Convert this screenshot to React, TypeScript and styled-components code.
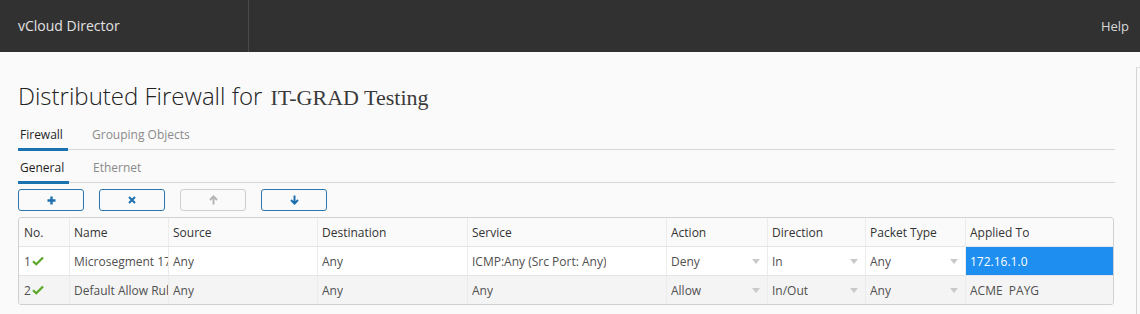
import React from 'react';
import styled, { createGlobalStyle } from 'styled-components';

const GlobalStyle = createGlobalStyle`
  html, body {
    margin: 0;
    padding: 0;
    background: #fafafa;
    font-family: 'Open Sans', 'Liberation Sans', sans-serif;
  }
`;

const Page = styled.div`
  width: 1140px;
  height: 314px;
  overflow: hidden;
  display: flex;
  flex-direction: column;
  background: #fafafa;
`;

const Header = styled.header`
  height: 52px;
  flex: none;
  display: flex;
  align-items: stretch;
  background: #313131;
  color: #e2e2e2;
`;

const Brand = styled.div`
  width: 249px;
  padding-left: 18px;
  box-sizing: border-box;
  display: flex;
  align-items: center;
  font-size: 14px;
  border-right: 1px solid #4a4a4a;
  padding-bottom: 2px;
`;

const HeaderSpacer = styled.div`
  flex: 1;
`;

const HelpLink = styled.div`
  display: flex;
  align-items: center;
  padding-right: 11px;
  font-size: 13px;
  color: #d8d8d8;
`;

const Body = styled.div`
  flex: 1;
  display: flex;
`;

const Main = styled.main`
  flex: 1;
  padding: 29px 22px 0 18px;
`;

const Scrollbar = styled.div`
  width: 3px;
  border-left: 1px solid #d4d4d4;
  border-top: 1px solid #e0e0e0;
  margin-top: 15px;
`;

const Title = styled.h1`
  margin: 0;
  height: 30px;
  font-weight: 300;
  font-size: 24px;
  line-height: 30px;
  color: #222;
`;

const SerifName = styled.span`
  font-family: 'Liberation Serif', serif;
  font-weight: 400;
  font-size: 22px;
  line-height: 1;
  color: #3a3a3a;
  margin-left: 2px;
`;

const TabBar = styled.nav<{ $top: number }>`
  display: flex;
  height: 30px;
  margin-top: ${(p) => p.$top}px;
  margin-right: -1px;
  border-bottom: 1px solid #d7d7d7;
  box-sizing: border-box;
`;

const Tab = styled.div<{ $active?: boolean; $width: number }>`
  width: ${(p) => p.$width}px;
  display: flex;
  align-items: center;
  justify-content: flex-start;
  padding-left: ${(p) => (p.$active ? 2 : 0)}px;
  box-sizing: border-box;
  font-size: 12px;
  color: ${(p) => (p.$active ? '#1f1f1f' : '#8a8a8a')};
  border-bottom: 3px solid ${(p) => (p.$active ? '#1a73b0' : 'transparent')};
  margin-bottom: -2px;
  margin-right: ${(p) => (p.$active ? 24 : 0)}px;
`;

const Toolbar = styled.div`
  display: flex;
  gap: 15px;
  margin-top: 6px;
`;

const ToolButton = styled.button<{ $disabled?: boolean }>`
  width: 66px;
  height: 22px;
  padding: 0;
  display: flex;
  align-items: center;
  justify-content: center;
  background: transparent;
  border: 1px solid ${(p) => (p.$disabled ? '#cfcfcf' : '#2d76ad')};
  border-radius: 3px;
  color: ${(p) => (p.$disabled ? '#b5b5b5' : '#1d6fae')};
`;

const Table = styled.div`
  margin-top: 6px;
  border: 1px solid #d0d0d0;
  border-radius: 3px;
  overflow: hidden;
  font-size: 12px;
  color: #444;
`;

const Row = styled.div<{ $bg: string }>`
  display: grid;
  grid-template-columns: 50px 99px 149px 150px 199px 101px 98px 100px 148px;
  height: 28px;
  background: ${(p) => p.$bg};
  border-top: 1px solid #e4e4e4;
  &:first-child {
    border-top: none;
  }
`;

const Cell = styled.div<{ $selected?: boolean; $head?: boolean }>`
  display: flex;
  align-items: center;
  justify-content: space-between;
  padding: 0 0 0 4px;
  white-space: nowrap;
  overflow: hidden;
  border-left: 1px solid #ececec;
  color: ${(p) => (p.$selected ? '#fff' : p.$head ? '#333' : '#505050')};
  background: ${(p) => (p.$selected ? '#1e8ef0' : 'transparent')};
  &:first-child {
    border-left: none;
    padding-left: 5px;
  }
`;

const CellText = styled.span`
  overflow: hidden;
  white-space: pre;
`;

const Caret = styled.span`
  width: 0;
  height: 0;
  flex: none;
  border-left: 4px solid transparent;
  border-right: 4px solid transparent;
  border-top: 5px solid #c9c9c9;
  margin-right: 7px;
`;

const Check = () => (
  <svg width="12" height="10" viewBox="0 0 12 10" style={{ marginLeft: 1 }}>
    <path d="M1 5.2 L4.3 8.3 L11 1.5" fill="none" stroke="#5aa626" strokeWidth="2.2" />
  </svg>
);

const PlusIcon = () => (
  <svg width="9" height="9" viewBox="0 0 9 9">
    <path d="M4.5 0.5 V8.5 M0.5 4.5 H8.5" stroke="currentColor" strokeWidth="2.4" />
  </svg>
);

const CrossIcon = () => (
  <svg width="8" height="8" viewBox="0 0 8 8">
    <path d="M1 1 L7 7 M7 1 L1 7" stroke="currentColor" strokeWidth="2" />
  </svg>
);

const ArrowIcon = ({ up }: { up?: boolean }) => (
  <svg width="9" height="10" viewBox="0 0 9 10" style={{ transform: up ? 'rotate(180deg)' : undefined }}>
    <path d="M4.5 0.5 V8 M1 5 L4.5 8.6 L8 5" fill="none" stroke="currentColor" strokeWidth="2" />
  </svg>
);

const headers = ['No.', 'Name', 'Source', 'Destination', 'Service', 'Action', 'Direction', 'Packet Type', 'Applied To'];

const rules = [
  {
    no: '1',
    name: 'Microsegment 172.16.1.0',
    source: 'Any',
    dest: 'Any',
    service: 'ICMP:Any (Src Port: Any)',
    action: 'Deny',
    direction: 'In',
    packet: 'Any',
    applied: '172.16.1.0',
    selected: true,
    bg: '#ffffff',
  },
  {
    no: '2',
    name: 'Default Allow Rule',
    source: 'Any',
    dest: 'Any',
    service: 'Any',
    action: 'Allow',
    direction: 'In/Out',
    packet: 'Any',
    applied: 'ACME  PAYG',
    selected: false,
    bg: '#f4f4f4',
  },
];

export default function App() {
  return (
    <Page>
      <GlobalStyle />
      <Header>
        <Brand>vCloud Director</Brand>
        <HeaderSpacer />
        <HelpLink>Help</HelpLink>
      </Header>
      <Body>
        <Main>
          <Title>
            Distributed Firewall for <SerifName>IT-GRAD Testing</SerifName>
          </Title>
          <TabBar $top={9}>
            <Tab $active $width={50}>Firewall</Tab>
            <Tab $width={120}>Grouping Objects</Tab>
          </TabBar>
          <TabBar $top={3}>
            <Tab $active $width={51}>General</Tab>
            <Tab $width={80}>Ethernet</Tab>
          </TabBar>
          <Toolbar>
            <ToolButton><PlusIcon /></ToolButton>
            <ToolButton><CrossIcon /></ToolButton>
            <ToolButton $disabled><ArrowIcon up /></ToolButton>
            <ToolButton><ArrowIcon /></ToolButton>
          </Toolbar>
          <Table>
            <Row $bg="#fafafa">
              {headers.map((h) => (
                <Cell key={h} $head>
                  <CellText>{h}</CellText>
                </Cell>
              ))}
            </Row>
            {rules.map((r) => (
              <Row key={r.no} $bg={r.bg}>
                <Cell>
                  <CellText>
                    {r.no}
                    <Check />
                  </CellText>
                </Cell>
                <Cell><CellText>{r.name}</CellText></Cell>
                <Cell><CellText>{r.source}</CellText></Cell>
                <Cell><CellText>{r.dest}</CellText></Cell>
                <Cell><CellText>{r.service}</CellText></Cell>
                <Cell><CellText>{r.action}</CellText><Caret /></Cell>
                <Cell><CellText>{r.direction}</CellText><Caret /></Cell>
                <Cell><CellText>{r.packet}</CellText><Caret /></Cell>
                <Cell $selected={r.selected}>
                  <CellText>{r.applied}</CellText>
                </Cell>
              </Row>
            ))}
          </Table>
        </Main>
        <Scrollbar />
      </Body>
    </Page>
  );
}
